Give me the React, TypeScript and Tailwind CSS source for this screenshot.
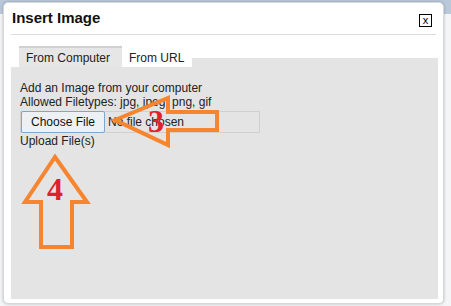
import React from "react";

function Arrows() {
    return (
        <svg className="pointer-events-none absolute left-0 top-0" width="451" height="306" viewBox="0 0 451 306">
            {/* arrow 3, pointing left at the file field */}
            <polygon
                points="115,120 168,98 168,112 217,112 217,130 168,130 168,145"
                fill="none"
                stroke="#f7842e"
                strokeWidth="4"
                strokeLinejoin="miter"
            />
            {/* arrow 4, pointing up at the upload link */}
            <polygon
                points="55,157 87,202 72,202 72,247 41,247 41,202 25,202"
                fill="none"
                stroke="#f7842e"
                strokeWidth="4"
                strokeLinejoin="miter"
            />
        </svg>
    );
}

export default function App() {
    return (
        <div className="relative h-[306px] w-[451px] overflow-hidden bg-[#f4f5f7] font-['Liberation_Sans',Arial,sans-serif]">
            <div className="h-[14px] w-full bg-[#b9c9da]" />
            <div className="absolute left-[3px] top-[2px] flex h-[302px] w-[441px] flex-col rounded-[5px] border border-[#d8d8d8] bg-white px-[7px] shadow-[0_0_3px_rgba(0,0,0,0.25)]">
                {/* header */}
                <div className="flex h-[32px] items-center justify-between border-b border-[#dcdcdc] pl-[1px] pr-[4px]">
                    <h1 className="text-[15px] font-bold text-[#111]">Insert Image</h1>
                    <button className="mt-[3px] flex h-[13px] w-[13px] items-center justify-center border border-black bg-white text-[11px] leading-none text-black">
                        x
                    </button>
                </div>

                {/* tabs */}
                <div className="mt-[11px] flex h-[21px] text-[12px] leading-[14px] text-[#222]">
                    <div className="w-[8px]" />
                    <div className="w-[103px] border-t-2 border-[#d0d0d0] bg-[#e6e6e6] pl-[7px] pt-[3px]">
                        From Computer
                    </div>
                    <div className="bg-white pl-[7px] pr-[8px] pt-[5px]">From URL</div>
                    <div className="mr-[-2px] mt-[12px] flex-1 bg-[#e4e4e4]" />
                </div>
                <div className="mr-[-2px] mb-[4px] flex flex-1 flex-col bg-[#e4e4e4] pl-[9px] pt-[14px] text-[12px] leading-[14px] text-[#222]">
                    <p>Add an Image from your computer</p>
                    <p>Allowed Filetypes: jpg, jpeg, png, gif</p>
                    <div className="mt-[2px] flex h-[22px] w-[240px] items-center border border-[#d0d0d0]">
                        <button className="h-[22px] w-[84px] rounded-[2px] border border-[#7fa6cc] bg-[#eef1f4] text-[12px] text-[#111]">
                            Choose File
                        </button>
                        <span className="ml-[3px]">No file chosen</span>
                    </div>
                    <p className="mt-[1px]">Upload File(s)</p>
                </div>
            </div>

            <Arrows />
            <span className="absolute left-[148px] top-[105px] font-['Liberation_Serif',serif] text-[32px] font-bold leading-none text-[#e0202a]">
                3
            </span>
            <span className="absolute left-[47px] top-[173px] font-['Liberation_Serif',serif] text-[32px] font-bold leading-none text-[#e0202a]">
                4
            </span>
        </div>
    );
}
